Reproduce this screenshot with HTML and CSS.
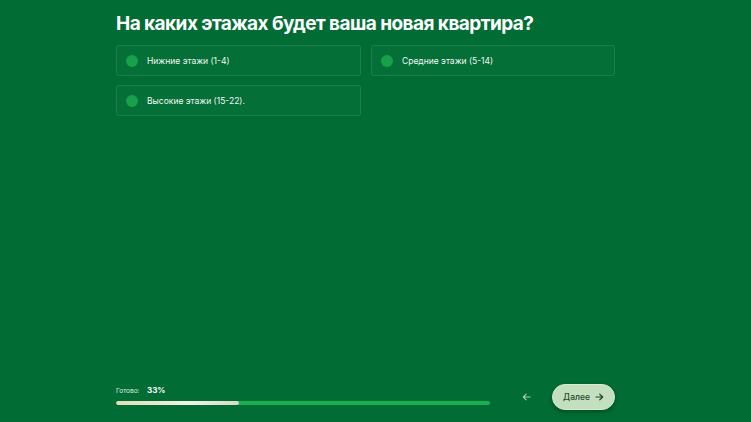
FILE: index.html
```html
<!DOCTYPE html>
<html lang="ru">
<head>
<meta charset="utf-8">
<link rel="stylesheet" href="styles.css">
</head>
<body>
<div class="page">
  <h1 class="title">На каких этажах будет ваша новая квартира?</h1>
  <div class="options">
    <label class="option"><span class="dot"></span><span class="opt-text">Нижние этажи (1-4)</span></label>
    <label class="option"><span class="dot"></span><span class="opt-text">Средние этажи (5-14)</span></label>
    <label class="option"><span class="dot"></span><span class="opt-text">Высокие этажи (15-22).</span></label>
  </div>
  <div class="footer">
    <div class="progress">
      <div class="progress-label"><span class="ready">Готово:</span><span class="pct">33%</span></div>
      <div class="track"><div class="fill" style="width:33%"></div></div>
    </div>
    <button class="back" type="button">
      <svg width="9" height="8" viewBox="0 0 9 8"><path d="M8 4H1.5M4.2 1.2L1.3 4l2.9 2.8" fill="none" stroke="currentColor" stroke-width="1.1" stroke-linecap="round" stroke-linejoin="round"/></svg>
    </button>
    <button class="next" type="button">Далее
      <svg width="9" height="8" viewBox="0 0 9 8"><path d="M1 4h6.5M4.8 1.2L7.7 4 4.8 6.8" fill="none" stroke="currentColor" stroke-width="1.2" stroke-linecap="round" stroke-linejoin="round"/></svg>
    </button>
  </div>
</div>
</body>
</html>
```
FILE: styles.css
```css
html, body {
  margin: 0;
  padding: 0;
  background: #016d34;
}
body {
  font-family: "Inter", "Noto Sans", sans-serif;
  color: #ffffff;
}
.page {
  box-sizing: border-box;
  height: 422px;
  width: 499px;
  margin-left: 116px;
  padding-top: 12px;
  display: flex;
  flex-direction: column;
}
.title {
  margin: 0;
  font-size: 19px;
  line-height: 24px;
  font-weight: 700;
  letter-spacing: -0.55px;
  white-space: nowrap;
}
.options {
  margin-top: 9px;
  display: grid;
  grid-template-columns: 245px 244px;
  column-gap: 10px;
  row-gap: 9px;
}
.option {
  box-sizing: border-box;
  height: 31px;
  border: 1px solid rgba(255, 255, 255, 0.1);
  border-radius: 3px;
  display: flex;
  align-items: center;
  padding-left: 9px;
  background: rgba(255, 255, 255, 0.015);
}
.dot {
  width: 12px;
  height: 12px;
  border-radius: 50%;
  background: #19a04b;
  flex: none;
}
.opt-text {
  margin-left: 9px;
  font-size: 8.5px;
  color: #f2f7f3;
}
.footer {
  margin-top: auto;
  margin-bottom: 10px;
  display: flex;
  align-items: center;
}
.progress {
  width: 374px;
  padding-top: 3px;
  padding-bottom: 7px;
}
.progress-label {
  display: flex;
  align-items: baseline;
  height: 12px;
}
.ready {
  font-size: 6.5px;
  color: #dfeee3;
  width: 31px;
}
.pct {
  font-size: 8px;
  font-weight: 700;
}
.track {
  margin-top: 4px;
  height: 4px;
  border-radius: 2px;
  background: #17b14f;
  overflow: hidden;
}
.fill {
  height: 100%;
  border-radius: 2px;
  background: linear-gradient(90deg, #e2dcb9, #f4f2e4 60%, #d6d9cb);
}
.back {
  margin-left: 32px;
  background: none;
  border: none;
  padding: 0;
  color: #a6d3b2;
  display: flex;
  align-items: center;
  width: 10px;
  height: 26px;
}
.next {
  margin-left: 20px;
  box-sizing: border-box;
  width: 63px;
  height: 26px;
  border-radius: 13px;
  border: 1px solid #d6ead2;
  background: #c3dfbe;
  color: #1f4a2b;
  font-family: "Inter", "Noto Sans", sans-serif;
  font-size: 8.5px;
  font-weight: 500;
  display: flex;
  align-items: center;
  justify-content: center;
  gap: 5px;
  padding: 0;
  box-shadow: 0 2px 4px rgba(0, 40, 15, 0.45);
}
```
